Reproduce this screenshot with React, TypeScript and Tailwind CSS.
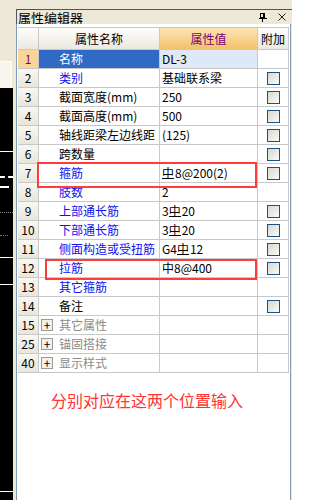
import React from "react";

type Row = {
  no: string;
  name: string;
  value?: React.ReactNode;
  tone: "blue" | "black" | "gray";
  check?: boolean;
  group?: boolean;
  selected?: boolean;
};

// HRB400 bar symbol: the round-bar glyph with a line under it
const Hrb = () => (
  <span className="inline-block leading-[11px] border-b border-black mr-px">中</span>
);

const rows: Row[] = [
  { no: "1", name: "名称", value: "DL-3", tone: "black", selected: true },
  { no: "2", name: "类别", value: "基础联系梁", tone: "blue", check: true },
  { no: "3", name: "截面宽度(mm)", value: "250", tone: "black", check: true },
  { no: "4", name: "截面高度(mm)", value: "500", tone: "black", check: true },
  { no: "5", name: "轴线距梁左边线距", value: "(125)", tone: "black", check: true },
  { no: "6", name: "跨数量", tone: "black", check: true },
  {
    no: "7",
    name: "箍筋",
    value: (
      <>
        <Hrb />8@200(2)
      </>
    ),
    tone: "blue",
    check: true,
  },
  { no: "8", name: "肢数", value: "2", tone: "blue" },
  {
    no: "9",
    name: "上部通长筋",
    value: (
      <>
        3<Hrb />20
      </>
    ),
    tone: "blue",
    check: true,
  },
  {
    no: "10",
    name: "下部通长筋",
    value: (
      <>
        3<Hrb />20
      </>
    ),
    tone: "blue",
    check: true,
  },
  {
    no: "11",
    name: "侧面构造或受扭筋",
    value: (
      <>
        G4<Hrb />12
      </>
    ),
    tone: "blue",
    check: true,
  },
  { no: "12", name: "拉筋", value: "中8@400", tone: "blue", check: true },
  { no: "13", name: "其它箍筋", tone: "blue" },
  { no: "14", name: "备注", tone: "black", check: true },
  { no: "15", name: "其它属性", tone: "gray", group: true },
  { no: "25", name: "锚固搭接", tone: "gray", group: true },
  { no: "40", name: "显示样式", tone: "gray", group: true },
];

const toneClass = {
  blue: "text-[#1010f0]",
  black: "text-black",
  gray: "text-[#8a8a8a]",
};

const cell = "h-[19px] border-r border-b border-[#c8c8c8] flex items-center";

const Checkbox = () => (
  <div className="w-[13px] h-[13px] border border-[#1c5180] bg-linear-to-br from-[#d8d8d0] to-[#fbfbf8]" />
);

const PropertyTable = () => (
  <div className="relative w-[271px]">
    <div className="grid grid-cols-[21px_121px_98px_31px] border-t border-[#c8c8c8]">
      <div className="h-[22px] border-r border-b border-[#c8c8c8] bg-linear-to-b from-[#fdfdfb] to-[#ebe9df]" />
      <div className="h-[22px] border-r border-b border-[#c8c8c8] bg-linear-to-b from-[#fdfdfb] to-[#ebe9df] flex items-center justify-center">
        属性名称
      </div>
      <div className="h-[22px] border-r border-b border-[#c8c8c8] bg-linear-to-b from-[#fce5b6] to-[#f3c168] flex items-center justify-center text-[#7a0078]">
        属性值
      </div>
      <div className="h-[22px] border-r border-b border-[#c8c8c8] bg-linear-to-b from-[#fdfdfb] to-[#ebe9df] flex items-center justify-center">
        附加
      </div>

      {rows.map((r) => (
        <React.Fragment key={r.no}>
          <div
            className={`${cell} justify-center ${
              r.selected
                ? "bg-[#fad597] text-[#800080]"
                : "bg-linear-to-b from-[#f8f7f2] to-[#e9e6da] text-black"
            }`}
          >
            {r.no}
          </div>
          <div
            className={`${cell} ${r.group ? "pl-[2px]" : "pl-[20px]"} ${
              r.selected ? "bg-[#316ac5] text-white" : toneClass[r.tone]
            } whitespace-nowrap overflow-hidden`}
          >
            {r.group && (
              <span className="w-[12px] h-[12px] mr-[6px] border border-[#9a9a9a] bg-[#f2f1ec] flex items-center justify-center text-black text-[12px] leading-none">
                +
              </span>
            )}
            {r.name}
          </div>
          <div
            className={`${cell} pl-[2px] whitespace-nowrap overflow-hidden ${
              r.selected ? "bg-[#dfe8f6]" : ""
            }`}
          >
            {r.value}
          </div>
          <div className={`${cell} justify-center`}>{r.check && <Checkbox />}</div>
        </React.Fragment>
      ))}
    </div>

    {/* red markers over the two input rows */}
    <div className="absolute left-[19px] top-[135px] w-[220px] h-[26px] border-2 border-[#ff3c3c]" />
    <div className="absolute left-[27px] top-[232px] w-[212px] h-[21px] border-2 border-[#ff3c3c]" />
  </div>
);

const CanvasStrip = () => (
  <div className="w-[16px] flex flex-col">
    <div className="h-[61px]" />
    <div className="h-[27px] w-[12px] bg-[#f6f5ee] border-t border-r border-[#fdfdfb]" />
    <div className="flex-1 w-[13px] bg-black flex flex-col">
      <div className="h-[63px]" />
      <div className="h-px bg-white" />
      <div className="h-[24px]" />
      <div className="h-0 border-t-2 border-dashed border-white" />
      <div className="h-[8px]" />
      <div className="h-0 w-[9px] border-t-2 border-dashed border-white" />
      <div className="h-[24px]" />
      <div className="h-0 border-t border-dotted border-[#888]" />
      <div className="h-[22px]" />
      <div className="h-0 w-[8px] border-t border-dotted border-[#777]" />
      <div className="h-[21px]" />
      <div className="h-px bg-white" />
      <div className="h-[26px]" />
      <div className="h-px bg-white" />
      <div className="h-[206px]" />
      <div className="h-px bg-white" />
    </div>
  </div>
);

export default function App() {
  return (
    <div
      className="w-[292px] h-[500px] bg-[#ece9d8] flex overflow-hidden text-[12px] text-black"
      style={{ fontFamily: '"Noto Sans CJK SC", "Noto Sans", sans-serif' }}
    >
      <CanvasStrip />
      <div className="w-[276px] flex flex-col">
        <div className="h-[9px]" />
        <div className="h-[15px] border-t border-l border-[#555] flex items-center pl-px pr-[6px] text-[13px] leading-none">
          <span>属性编辑器</span>
          <span className="ml-auto flex items-center gap-[11px]">
            <svg width="8" height="9" viewBox="0 0 8 9" className="text-black">
              <rect x="1.5" y="0.5" width="4" height="4" fill="none" stroke="currentColor" />
              <line x1="5" y1="0" x2="5" y2="5" stroke="currentColor" strokeWidth="2" />
              <line x1="0" y1="5.5" x2="8" y2="5.5" stroke="currentColor" />
              <line x1="3.5" y1="5.5" x2="3.5" y2="9" stroke="currentColor" />
            </svg>
            <svg width="8" height="8" viewBox="0 0 8 8">
              <line x1="0.5" y1="0.5" x2="7.5" y2="7.5" stroke="#222" />
              <line x1="7.5" y1="0.5" x2="0.5" y2="7.5" stroke="#222" />
            </svg>
          </span>
        </div>
        <div className="flex-1 mr-px bg-white border-l border-r border-[#7f9db9] pt-[3px] pl-px">
          <PropertyTable />
          <div className="mt-[19px] ml-[33px] text-[16px] leading-[16px] text-[#ff3434]">
            分别对应在这两个位置输入
          </div>
        </div>
      </div>
    </div>
  );
}
